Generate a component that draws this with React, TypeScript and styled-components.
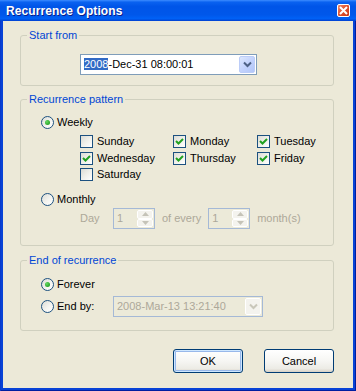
import React, { useState } from 'react';
import styled, { createGlobalStyle } from 'styled-components';

const GlobalStyle = createGlobalStyle`
  html, body {
    margin: 0;
    padding: 0;
    background: #0831d9;
  }
  * {
    box-sizing: border-box;
  }
`;

type Day = { name: string; checked: boolean };

const DAYS: Day[] = [
  { name: 'Sunday', checked: false },
  { name: 'Monday', checked: true },
  { name: 'Tuesday', checked: true },
  { name: 'Wednesday', checked: true },
  { name: 'Thursday', checked: true },
  { name: 'Friday', checked: true },
  { name: 'Saturday', checked: false },
];

function Chevron({ disabled }: { disabled?: boolean }) {
  return (
    <svg width="9" height="7" viewBox="0 0 9 7">
      <polyline
        points="1,1.5 4.5,5 8,1.5"
        fill="none"
        stroke={disabled ? '#c9c7ba' : '#4d6185'}
        strokeWidth="2"
      />
    </svg>
  );
}

function Arrow({ up }: { up?: boolean }) {
  return (
    <svg width="7" height="4" viewBox="0 0 7 4">
      <polygon points={up ? '0,4 3.5,0 7,4' : '0,0 3.5,4 7,0'} fill="#c5c3b8" />
    </svg>
  );
}

function CheckBox({ checked }: { checked: boolean }) {
  return (
    <Box>
      {checked && (
        <svg width="11" height="11" viewBox="0 0 11 11">
          <polyline points="2,5 4.5,7.5 9,3" fill="none" stroke="#21a121" strokeWidth="2" />
        </svg>
      )}
    </Box>
  );
}

function Radio({ checked }: { checked: boolean }) {
  return <RadioCircle>{checked && <Dot />}</RadioCircle>;
}

function SpinBox({ value }: { value: string }) {
  return (
    <Spin>
      <SpinValue>{value}</SpinValue>
      <SpinButtons>
        <SpinButton><Arrow up /></SpinButton>
        <SpinButton><Arrow /></SpinButton>
      </SpinButtons>
    </Spin>
  );
}

export default function App() {
  const [mode] = useState<'weekly' | 'monthly'>('weekly');
  const [end] = useState<'forever' | 'endby'>('forever');

  return (
    <>
      <GlobalStyle />
      <Window>
        <TitleBar>
          <Title>Recurrence Options</Title>
          <CloseButton>
            <svg width="9" height="9" viewBox="0 0 9 9">
              <path d="M1 1 L8 8 M8 1 L1 8" stroke="#fff" strokeWidth="2" />
            </svg>
          </CloseButton>
        </TitleBar>
        <Body>
          <Group>
            <Legend>Start from</Legend>
            <GroupContent $pt={12} $pb={10}>
              <StartRow>
                <Combo $width={177}>
                  <ComboText>
                    <Selected>2008</Selected>-Dec-31 08:00:01
                  </ComboText>
                  <DropButton><Chevron /></DropButton>
                </Combo>
              </StartRow>
            </GroupContent>
          </Group>

          <Group $mt={7}>
            <Legend>Recurrence pattern</Legend>
            <GroupContent $pt={10} $pb={16}>
              <OptionRow>
                <Radio checked={mode === 'weekly'} />
                <Label>Weekly</Label>
              </OptionRow>
              <DaysGrid>
                {DAYS.map((d) => (
                  <DayItem key={d.name}>
                    <CheckBox checked={d.checked} />
                    <Label>{d.name}</Label>
                  </DayItem>
                ))}
              </DaysGrid>
              <OptionRow $mt={12}>
                <Radio checked={mode === 'monthly'} />
                <Label>Monthly</Label>
              </OptionRow>
              <MonthRow>
                <DimLabel $width={26}>Day</DimLabel>
                <SpinBox value="1" />
                <DimLabel>of every</DimLabel>
                <SpinBox value="1" />
                <DimLabel>month(s)</DimLabel>
              </MonthRow>
            </GroupContent>
          </Group>

          <Group $mt={8}>
            <Legend>End of recurrence</Legend>
            <GroupContent $pt={11} $pb={13}>
              <OptionRow>
                <Radio checked={end === 'forever'} />
                <Label>Forever</Label>
              </OptionRow>
              <EndRow>
                <Radio checked={end === 'endby'} />
                <Label $width={53}>End by:</Label>
                <Combo $width={150} $disabled>
                  <ComboText $disabled>2008-Mar-13 13:21:40</ComboText>
                  <DropButton $disabled><Chevron disabled /></DropButton>
                </Combo>
              </EndRow>
            </GroupContent>
          </Group>

          <ButtonRow>
            <PushButton $default>OK</PushButton>
            <PushButton>Cancel</PushButton>
          </ButtonRow>
        </Body>
      </Window>
    </>
  );
}

const Window = styled.div`
  width: 356px;
  height: 391px;
  display: flex;
  flex-direction: column;
  background: #0842d6;
  box-shadow: inset 1px 0 #0a3acb, inset -1px 0 #001ea0, inset 0 -1px #001ea0;
  font-family: "Liberation Sans", Arial, sans-serif;
  font-size: 11px;
  color: #000;
`;

const TitleBar = styled.div`
  height: 21px;
  display: flex;
  align-items: center;
  justify-content: space-between;
  padding: 0 6px 0 6px;
  background: linear-gradient(
    180deg,
    #3d8cff 0,
    #0a62f0 10%,
    #0055e8 30%,
    #0057ea 70%,
    #0061f6 88%,
    #0050e0 95%,
    #003dd0 100%
  );
`;

const Title = styled.span`
  color: #fff;
  font-weight: bold;
  font-size: 12px;
  letter-spacing: 0.1px;
  text-shadow: 1px 1px #0a1e8a;
  padding-top: 1px;
`;

const CloseButton = styled.div`
  width: 13px;
  height: 13px;
  border: 1px solid #fff;
  border-radius: 2px;
  background: linear-gradient(135deg, #f08a6c 0%, #e2542f 45%, #c8381a 100%);
  display: flex;
  align-items: center;
  justify-content: center;
`;

const Body = styled.div`
  flex: 1;
  margin: 0 3px 3px 3px;
  background: #ece9d8;
  padding: 8px 19px 0 17px;
  display: flex;
  flex-direction: column;
`;

const Group = styled.fieldset<{ $mt?: number }>`
  margin: ${(p) => p.$mt ?? 0}px 0 0 0;
  padding: 0;
  min-width: 0;
  border: 1px solid #d0d0bf;
  border-radius: 3px;
`;

const Legend = styled.legend`
  margin-left: 6px;
  padding: 0 2px;
  color: #0046d5;
  font-size: 11px;
  line-height: 13px;
`;

const GroupContent = styled.div<{ $pt: number; $pb: number }>`
  padding: ${(p) => p.$pt}px 0 ${(p) => p.$pb}px 20px;
  display: flex;
  flex-direction: column;
`;

const StartRow = styled.div`
  display: flex;
  padding-left: 39px;
`;

const Combo = styled.div<{ $width: number; $disabled?: boolean }>`
  width: ${(p) => p.$width}px;
  height: 21px;
  border: 1px solid ${(p) => (p.$disabled ? '#a5b9d6' : '#7f9db9')};
  background: ${(p) => (p.$disabled ? '#ecead9' : '#fff')};
  display: flex;
  align-items: center;
  justify-content: space-between;
  padding: 0 1px 0 3px;
`;

const ComboText = styled.span<{ $disabled?: boolean }>`
  color: ${(p) => (p.$disabled ? '#aca899' : '#000')};
  line-height: 13px;
  white-space: nowrap;
`;

const Selected = styled.span`
  background: #316ac5;
  color: #fff;
`;

const DropButton = styled.div<{ $disabled?: boolean }>`
  width: 16px;
  height: 17px;
  border-radius: 2px;
  display: flex;
  align-items: center;
  justify-content: center;
  background: ${(p) =>
    p.$disabled
      ? '#f4f3ee'
      : 'linear-gradient(135deg, #dde8fe 0%, #c3d3fd 50%, #b2c6f8 100%)'};
  border: 1px solid ${(p) => (p.$disabled ? '#fff' : '#bccdf8')};
`;

const OptionRow = styled.div<{ $mt?: number }>`
  display: flex;
  align-items: center;
  gap: 3px;
  height: 13px;
  margin-top: ${(p) => p.$mt ?? 0}px;
`;

const Label = styled.span<{ $width?: number }>`
  line-height: 13px;
  white-space: nowrap;
  ${(p) => (p.$width ? `width: ${p.$width}px;` : '')}
`;

const DimLabel = styled(Label)`
  color: #aca899;
`;

const RadioCircle = styled.div`
  width: 13px;
  height: 13px;
  flex: none;
  border-radius: 50%;
  border: 1px solid #1c5180;
  background: linear-gradient(135deg, #dcdcd5 0%, #f4f4f0 55%, #ffffff 100%);
  display: flex;
  align-items: center;
  justify-content: center;
`;

const Dot = styled.div`
  width: 5px;
  height: 5px;
  border-radius: 50%;
  background: radial-gradient(circle at 35% 35%, #64d962 0%, #2aa42a 70%, #1e8c1e 100%);
`;

const DaysGrid = styled.div`
  display: grid;
  grid-template-columns: 93px 84px auto;
  grid-auto-rows: 13px;
  row-gap: 3.5px;
  margin: 6px 0 0 39px;
`;

const DayItem = styled.div`
  display: flex;
  align-items: center;
  gap: 4px;
`;

const Box = styled.div`
  width: 13px;
  height: 13px;
  flex: none;
  border: 1px solid #1c5180;
  background: linear-gradient(135deg, #dcdcd5 0%, #f0f0ea 50%, #ffffff 100%);
  display: flex;
  align-items: center;
  justify-content: center;
`;

const MonthRow = styled.div`
  display: flex;
  align-items: center;
  gap: 7px;
  margin: 2px 0 0 39px;
  height: 21px;
`;

const Spin = styled.div`
  width: 42px;
  height: 21px;
  border: 1px solid #a5b9d6;
  background: #ecead9;
  display: flex;
  justify-content: space-between;
  padding: 1px;
`;

const SpinValue = styled.span`
  color: #aca899;
  line-height: 17px;
  padding-left: 2px;
`;

const SpinButtons = styled.div`
  width: 16px;
  display: flex;
  flex-direction: column;
`;

const SpinButton = styled.div`
  flex: 1;
  background: #f4f3ee;
  border: 1px solid #fff;
  border-radius: 2px;
  display: flex;
  align-items: center;
  justify-content: center;
`;

const EndRow = styled.div`
  display: flex;
  align-items: center;
  gap: 3px;
  height: 21px;
  margin-top: 5px;
`;

const ButtonRow = styled.div`
  display: flex;
  justify-content: flex-end;
  gap: 21px;
  margin-top: 18px;
`;

const PushButton = styled.div<{ $default?: boolean }>`
  width: 70px;
  height: 24px;
  border: 1px solid #003c74;
  border-radius: 3px;
  display: flex;
  align-items: center;
  justify-content: center;
  background: linear-gradient(180deg, #ffffff 0%, #f6f6f3 50%, #ecebe5 85%, #d6d0c5 100%);
  box-shadow: ${(p) =>
    p.$default ? 'inset 0 0 0 1px #cee7ff, inset 0 0 0 2px #98b8ea' : 'none'};
`;
